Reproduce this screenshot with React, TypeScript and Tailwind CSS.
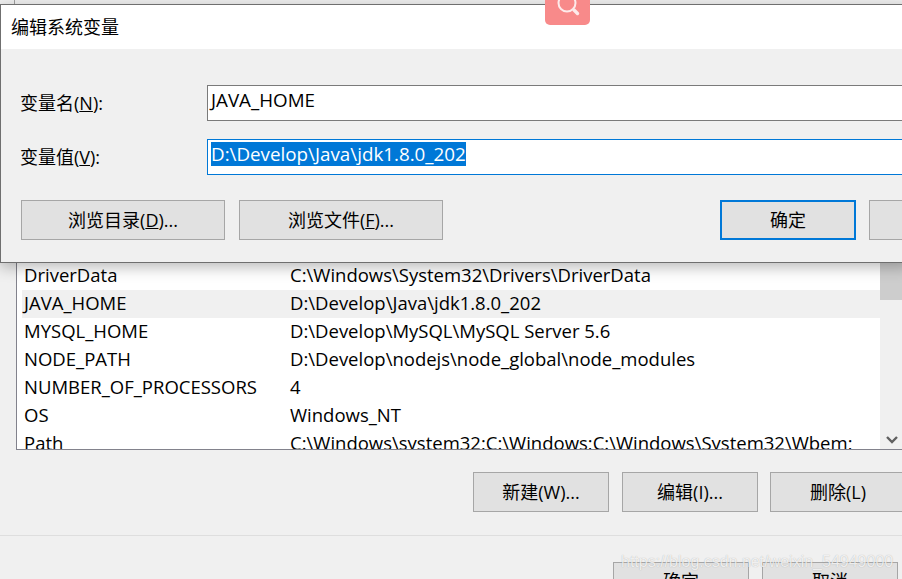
const rows = [
  { name: "DriverData", value: "C:\\Windows\\System32\\Drivers\\DriverData" },
  { name: "JAVA_HOME", value: "D:\\Develop\\Java\\jdk1.8.0_202", active: true },
  { name: "MYSQL_HOME", value: "D:\\Develop\\MySQL\\MySQL Server 5.6" },
  { name: "NODE_PATH", value: "D:\\Develop\\nodejs\\node_global\\node_modules" },
  { name: "NUMBER_OF_PROCESSORS", value: "4" },
  { name: "OS", value: "Windows_NT" },
  { name: "Path", value: "C:\\Windows\\system32;C:\\Windows;C:\\Windows\\System32\\Wbem;" },
];

const font = "font-['Open_Sans','Noto_Sans_CJK_SC',sans-serif]";

const Button = ({
  label,
  className,
  focused,
  clipped,
}: {
  label: React.ReactNode;
  className: string;
  focused?: boolean;
  clipped?: boolean;
}) => (
  <div
    className={`flex shrink-0 justify-center bg-[#e1e1e1] text-[18px] text-black ${
      focused ? "border-2 border-[#0078d7]" : "border border-[#a6a6a6]"
    } ${clipped ? "items-start pt-[5px]" : "items-center"} ${className}`}
  >
    {label}
  </div>
);

export default function App() {
  return (
    <div className={`relative h-[579px] w-[902px] overflow-hidden bg-[#f0f0f0] ${font}`}>
      {/* window behind the dialog */}
      <div className="flex h-[579px] flex-col pt-[261px]">
        <div className="ml-[16px] flex h-[189px] shrink-0 border-b border-l border-[#82828c] bg-white">
          <div className="h-full w-[863px] overflow-hidden pl-[5px]">
            {rows.map((row) => (
              <div
                key={row.name}
                className={`flex h-[28px] items-center text-[18.5px] leading-[28px] text-black ${row.active ? "bg-[#f0f0f0]" : ""} ${row.name === "DriverData" ? "mt-[1px]" : ""}`}
              >
                <span className="relative top-[-1px] w-[268px] shrink-0 pl-[2px]">{row.name}</span>
                <span className="relative top-[-1px] whitespace-nowrap">{row.value}</span>
              </div>
            ))}
          </div>
          <div className="flex w-[22px] flex-col justify-between bg-[#f0f0f0]">
            <div className="mt-[1px] h-[38px] bg-[#cdcdcd]" />
            <svg className="mb-[3px] ml-[6px] h-[12px] w-[12px]" viewBox="0 0 12 12" fill="none" stroke="#606060" strokeWidth="2.4">
              <path d="M1 3l5 5 5-5" />
            </svg>
          </div>
        </div>
        <div className="mt-[22px] flex h-[40px] shrink-0 gap-[13px] pl-[473px]">
          <Button className="w-[136px]" label="新建(W)..." />
          <Button className="w-[136px]" label="编辑(I)..." />
          <Button className="ml-[-1px] w-[136px]" label="删除(L)" />
        </div>
        <div className="mt-[23px] h-[1px] shrink-0 bg-[#dedede]" />
        <div className="mt-[26px] flex shrink-0 gap-[13px] pl-[613px]">
          <Button clipped className="h-[40px] w-[136px]" label="确定" />
          <Button clipped className="h-[40px] w-[136px]" label="取消" />
        </div>
      </div>

      {/* edge of the window above the dialog */}
      <div className="absolute left-[14px] top-0 h-[4px] w-[1px] bg-[#a0a0a0]" />

      {/* edit dialog */}
      <div className="absolute left-0 top-[4px] h-[259px] w-[910px] border border-[#6f6f6f] bg-[#f0f0f0] shadow-[0_4px_14px_rgba(0,0,0,0.28)]">
        <div className="flex h-[44px] items-center bg-white pl-[10px] text-[18px] text-black">编辑系统变量</div>
        <div className="mt-[36px] flex items-center pl-[19px]">
          <span className="w-[187px] shrink-0 text-[18px] leading-[36px]">
            变量名(<span className="underline">N</span>):
          </span>
          <div className="h-[36px] w-[720px] shrink-0 border border-[#7a7a7a] bg-white pl-[3px] text-[18.8px] leading-[28px]">
            JAVA_HOME
          </div>
        </div>
        <div className="mt-[18px] flex items-center pl-[19px]">
          <span className="w-[187px] shrink-0 text-[18px] leading-[36px]">
            变量值(<span className="underline">V</span>):
          </span>
          <div className="h-[36px] w-[720px] shrink-0 border border-[#0078d7] bg-white pl-[3px] pt-[2px] text-[18.8px] leading-[24px]">
            <span className="inline-block h-[24px] bg-[#0078d7] text-white">D:\Develop\Java\jdk1.8.0_202</span>
          </div>
        </div>
        <div className="mt-[25px] flex pl-[20px]">
          <Button className="h-[40px] w-[204px]" label={<span>浏览目录(<span className="underline">D</span>)...</span>} />
          <Button className="ml-[14px] h-[40px] w-[204px]" label={<span>浏览文件(<span className="underline">F</span>)...</span>} />
          <Button focused className="ml-[277px] h-[40px] w-[136px]" label="确定" />
          <Button className="ml-[13px] h-[40px] w-[136px]" label="" />
        </div>
      </div>

      {/* page search badge over the screenshot */}
      <div className="absolute left-[545px] top-0 flex h-[25px] w-[45px] items-start justify-center overflow-hidden rounded-b-[5px] bg-[#f88a8a]">
        <svg className="mt-[-8px] h-[26px] w-[26px]" viewBox="0 0 26 26" fill="none" stroke="#fdeaea" strokeLinecap="round">
          <circle cx="12" cy="11" r="8.5" strokeWidth="2" />
          <path d="M19 18l3.5 3.5" strokeWidth="3.4" />
        </svg>
      </div>

      {/* watermark */}
      <div className="absolute left-[621px] top-[550px] whitespace-nowrap font-['Liberation_Sans',sans-serif] text-[16px] text-white/80 [text-shadow:0_0_1px_rgba(0,0,0,0.3)]">
        https://blog.csdn.net/weixin_54949000
      </div>
    </div>
  );
}
